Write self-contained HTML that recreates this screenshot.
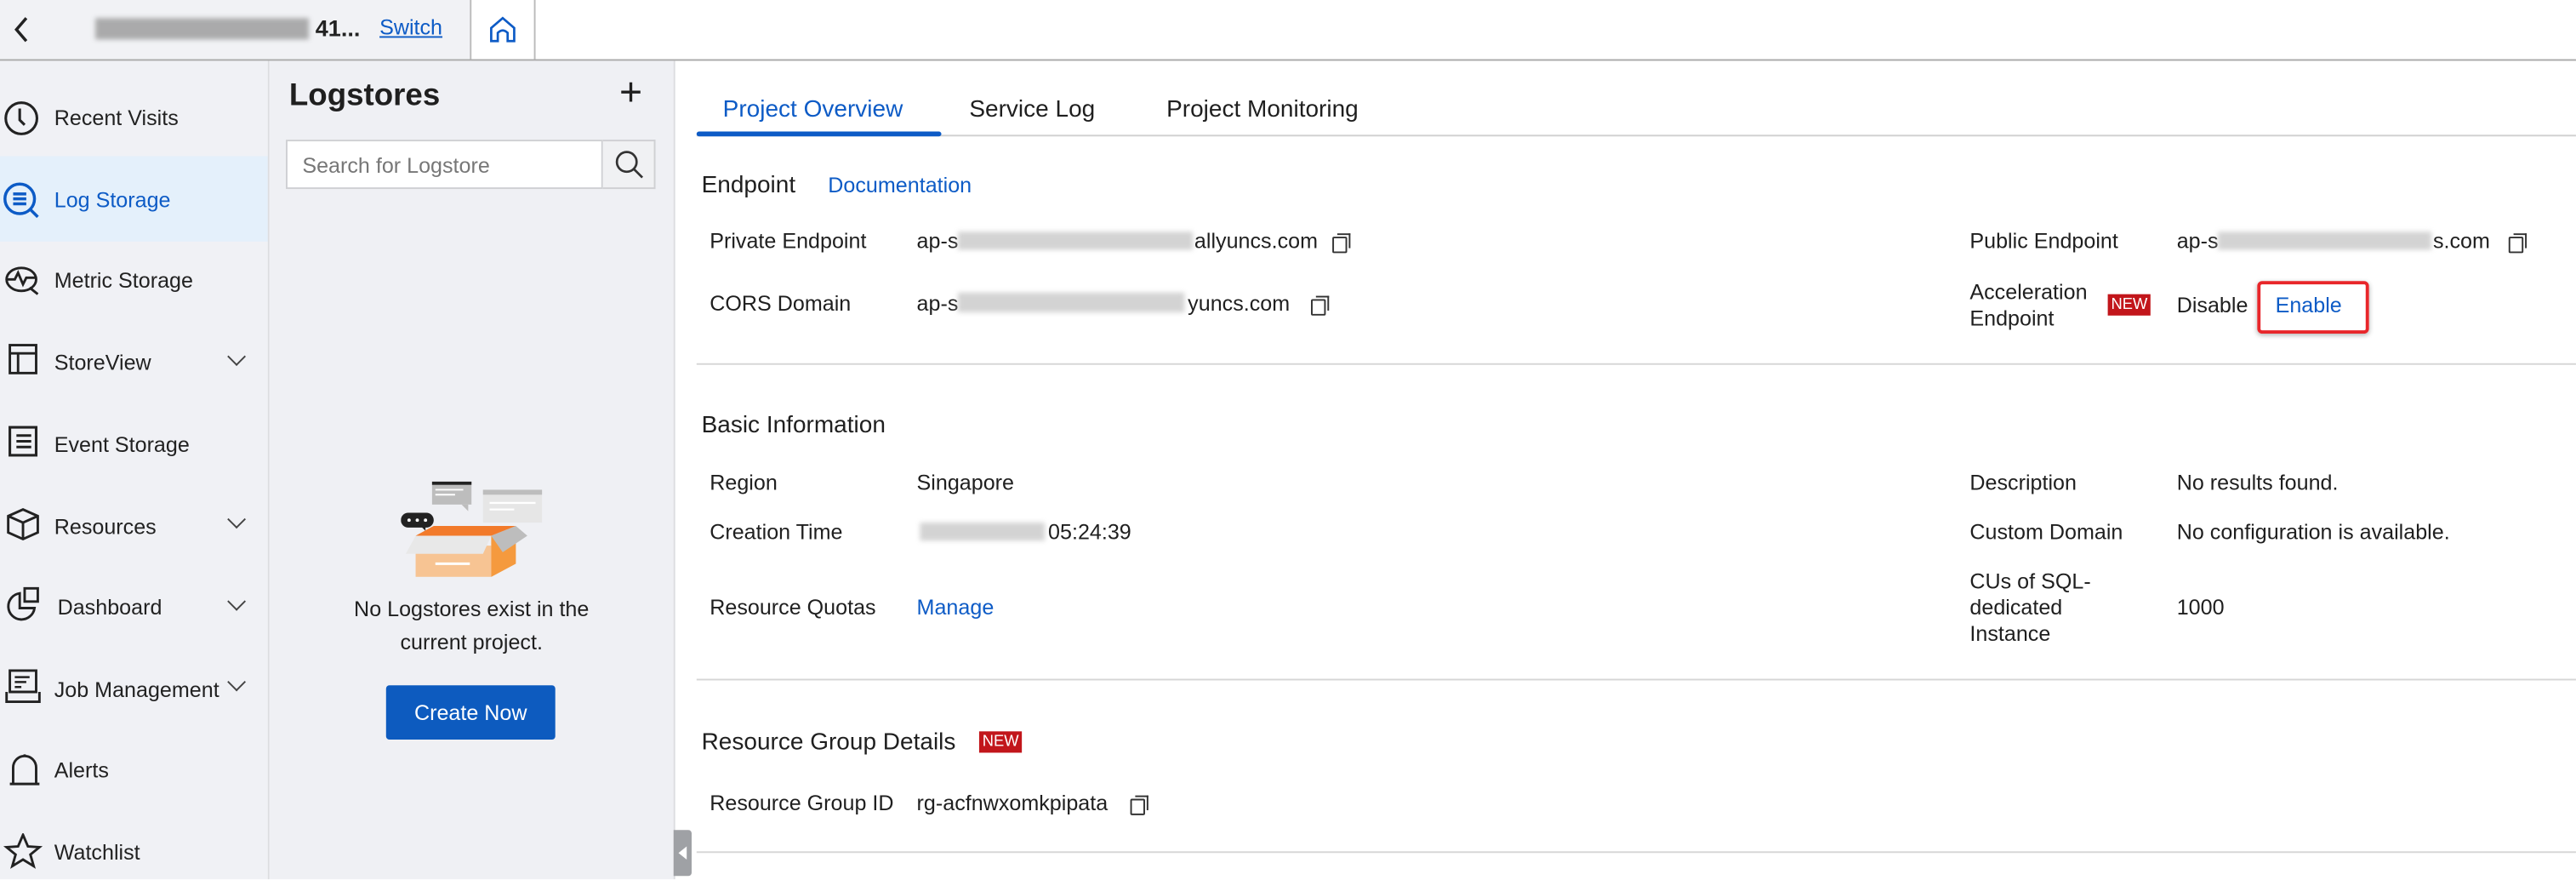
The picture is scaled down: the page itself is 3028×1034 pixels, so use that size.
<!DOCTYPE html>
<html><head><meta charset="utf-8"><style>
html,body{margin:0;padding:0;width:3028px;height:1034px;overflow:hidden;background:#fff}
#w{position:absolute;left:0;top:0;width:1568px;height:535px;transform:scale(1.9311);transform-origin:0 0;font-family:"Liberation Sans",sans-serif;color:#1f1f1f;font-size:13px}
.a{position:absolute;white-space:nowrap}
.blue{color:#0d5bc6}
.bl{position:absolute;background:#c8c8c8;filter:blur(1.5px);opacity:.8}
.cp{position:absolute;width:7px;height:8px;border:1px solid #333;border-radius:1px}
.cp:after{content:"";position:absolute;left:2px;top:-3px;width:7px;height:8px;border-top:1px solid #333;border-right:1px solid #333}
.nav{position:absolute;left:33px;font-size:13px;color:#222}
.chev{position:absolute;left:140px;width:7px;height:7px;border-right:1.2px solid #444;border-bottom:1.2px solid #444;transform:rotate(45deg)}
.hr{position:absolute;left:424px;width:1144px;height:1px;background:#d6d6d6}
.new{position:absolute;background:#c2161b;color:#fff;font-size:9.5px;padding:1px 2px;line-height:11px}
</style></head><body><div id="w">
<!-- top bar -->
<div class="a" style="left:0;top:0;width:286px;height:36px;background:#f1f2f5"></div>
<div class="a" style="left:0;top:36px;width:1568px;height:1px;background:#aaa"></div>
<div class="a" style="left:286px;top:0;width:1px;height:36px;background:#bbb"></div>
<div class="a" style="left:325px;top:0;width:1px;height:36px;background:#bbb"></div>
<svg class="a" style="left:8px;top:9px" width="10" height="18"><path d="M8 2 L2 9 L8 16" fill="none" stroke="#222" stroke-width="1.8"/></svg>
<div class="bl" style="left:58px;top:11px;width:130px;height:13px;background:#999"></div>
<div class="a" style="left:192px;top:9px;font-size:14px;font-weight:bold;color:#222">41...</div>
<div class="a blue" style="left:231px;top:9px;font-size:13px;text-decoration:underline">Switch</div>
<svg class="a" style="left:297px;top:9px" width="18" height="18"><path d="M2 16 V8 L9 2 L16 8 V16 H12 V11 Q9 8 6 11 V16 Z" fill="none" stroke="#0d5bc6" stroke-width="1.4"/></svg>
<!-- sidebar -->
<div class="a" style="left:0;top:37px;width:163px;height:498px;background:#f0f1f5"></div>
<div class="a" style="left:0;top:95px;width:163px;height:52px;background:#e4f0fb"></div>
<div class="a" style="left:163px;top:37px;width:1px;height:498px;background:#dcdde0"></div>
<svg class="a" style="left:2px;top:61px" width="22" height="22"><circle cx="11" cy="11" r="9.5" fill="none" stroke="#222" stroke-width="1.6"/><path d="M10 5 V12 L13 15" fill="none" stroke="#222" stroke-width="1.6"/></svg>
<div class="nav" style="top:64px">Recent Visits</div>
<svg class="a" style="left:2px;top:111px" width="24" height="24"><circle cx="10" cy="10" r="9" fill="none" stroke="#0d5bc6" stroke-width="1.8"/><path d="M6 7H14M6 10H14M6 13H14M16 16L21 21" stroke="#0d5bc6" stroke-width="1.8"/></svg>
<div class="nav blue" style="top:114px;color:#0d5bc6">Log Storage</div>
<svg class="a" style="left:3px;top:161px" width="22" height="20"><ellipse cx="10" cy="9" rx="9" ry="7" fill="none" stroke="#222" stroke-width="1.5"/><path d="M1 9H6L8 5L11 12L13 8H19M15 14L20 18" fill="none" stroke="#222" stroke-width="1.5"/></svg>
<div class="nav" style="top:163px">Metric Storage</div>
<svg class="a" style="left:5px;top:209px" width="20" height="20"><rect x="1" y="1" width="16" height="17" fill="none" stroke="#222" stroke-width="1.5"/><path d="M1 6H17M6 6V18" stroke="#222" stroke-width="1.5"/></svg>
<div class="nav" style="top:213px">StoreView</div><div class="chev" style="top:213px"></div>
<svg class="a" style="left:5px;top:259px" width="20" height="20"><rect x="1" y="1" width="16" height="17" fill="none" stroke="#222" stroke-width="1.6"/><path d="M5 6H14M5 9.5H14M5 13H14" stroke="#222" stroke-width="1.6"/></svg>
<div class="nav" style="top:263px">Event Storage</div>
<svg class="a" style="left:3px;top:309px" width="22" height="20"><path d="M2 5L11 1L20 5V15L11 19L2 15Z M2 5L11 9L20 5 M11 9V19" fill="none" stroke="#222" stroke-width="1.5"/></svg>
<div class="nav" style="top:313px">Resources</div><div class="chev" style="top:312px"></div>
<svg class="a" style="left:3px;top:357px" width="22" height="22"><path d="M9 4A8 8 0 1 0 18 13H9Z" fill="none" stroke="#222" stroke-width="1.5"/><path d="M12 1H20V9H12Z" fill="none" stroke="#222" stroke-width="1.5"/></svg>
<div class="nav" style="top:362px;left:35px">Dashboard</div><div class="chev" style="top:362px"></div>
<svg class="a" style="left:3px;top:407px" width="22" height="22"><path d="M3 1H19V14H3Z M1 14V20H21V14" fill="none" stroke="#222" stroke-width="1.5"/><path d="M6 5H15M6 8H13M6 11H10" stroke="#222" stroke-width="1.3"/></svg>
<div class="nav" style="top:412px">Job Management</div><div class="chev" style="top:411px"></div>
<svg class="a" style="left:5px;top:457px" width="20" height="22"><path d="M3 20V10A7 7 0 0 1 17 10V20M1 20H19M10 2V3" fill="none" stroke="#222" stroke-width="1.5"/></svg>
<div class="nav" style="top:461px">Alerts</div>
<svg class="a" style="left:2px;top:507px" width="24" height="22"><path d="M12 1L15 8L22 8.5L16.5 13L18.5 20L12 16L5.5 20L7.5 13L2 8.5L9 8Z" fill="none" stroke="#222" stroke-width="1.5"/></svg>
<div class="nav" style="top:511px">Watchlist</div>
<!-- logstores panel -->
<div class="a" style="left:164px;top:37px;width:246px;height:498px;background:#eff0f4"></div>
<div class="a" style="left:410px;top:37px;width:1px;height:498px;background:#dcdde0"></div>
<div class="a" style="left:176px;top:48px;font-size:19px;font-weight:bold">Logstores</div>
<div class="a" style="left:377px;top:43px;font-size:24px;font-weight:300">+</div>
<div class="a" style="left:174px;top:85px;width:193px;height:30px;background:#fff;border:1px solid #cfd0d3;box-sizing:border-box"></div>
<div class="a" style="left:184px;top:93px;color:#777;font-size:13px">Search for Logstore</div>
<div class="a" style="left:367px;top:85px;width:32px;height:30px;background:#f0f1f3;border:1px solid #cfd0d3;border-left:none;box-sizing:border-box"></div>
<svg class="a" style="left:374px;top:91px" width="18" height="18"><circle cx="7.5" cy="7.5" r="6" fill="none" stroke="#333" stroke-width="1.4"/><path d="M12 12L17 17" stroke="#333" stroke-width="1.4"/></svg>
<svg class="a" style="left:244px;top:293px" width="86" height="58" viewBox="0 0 86 58">
<rect x="50" y="5" width="36" height="20" fill="#e6e6e6"/><rect x="50" y="5" width="36" height="3" fill="#bdbdbd"/>
<path d="M54 13H82M54 17H69" stroke="#fff" stroke-width="1.2"/>
<rect x="19" y="0" width="24" height="14" fill="#bdbdbd"/><rect x="19" y="0" width="24" height="2" fill="#222"/>
<path d="M21 5H38M21 8H33" stroke="#fff" stroke-width="1"/><path d="M37 14L41 18V14Z" fill="#bdbdbd"/>
<rect x="0" y="19" width="20" height="9" rx="4.5" fill="#222"/><path d="M12 27L15 30V27Z" fill="#222"/>
<circle cx="5" cy="23.5" r="1" fill="#fff"/><circle cx="10" cy="23.5" r="1" fill="#fff"/><circle cx="15" cy="23.5" r="1" fill="#fff"/>
<path d="M9 33L20 27H70L55 33Z" fill="#f27a2a"/>
<path d="M9 39H55V58H9Z" fill="#f7c493"/><path d="M55 33L70 27V50L55 58Z" fill="#f59a3e"/>
<path d="M55 33L70 27L77 33L62 43Z" fill="#bdbdbd"/>
<path d="M3 44L9 33H55L50 44Z" fill="#e8e8e8"/>
<path d="M21 50H42" stroke="#fff" stroke-width="1.5"/>
</svg>
<div class="a" style="left:164px;top:361px;width:246px;text-align:center;white-space:normal;line-height:20px;font-size:13px">No Logstores exist in the<br>current project.</div>
<div class="a" style="left:235px;top:417px;width:103px;height:33px;background:#0d5bbf;border-radius:2px;color:#fff;text-align:center;line-height:33px;font-size:13px">Create Now</div>
<div class="a" style="left:410px;top:505px;width:11px;height:28px;background:#9fa1a5;border-radius:0 2px 2px 0"></div>
<svg class="a" style="left:412px;top:514px" width="7" height="10"><path d="M6 1L1 5L6 9Z" fill="#fff"/></svg>
<!-- main -->
<div class="a" style="left:424px;top:82px;width:1144px;height:1px;background:#d0d0d0"></div>
<div class="a" style="left:424px;top:80px;width:149px;height:3px;background:#0d5bc6;border-radius:2px"></div>
<div class="a blue" style="left:440px;top:59px;font-size:14.5px">Project Overview</div>
<div class="a" style="left:590px;top:59px;font-size:14.5px">Service Log</div>
<div class="a" style="left:710px;top:59px;font-size:14.5px">Project Monitoring</div>
<div class="a" style="left:427px;top:105px;font-size:14.5px">Endpoint</div>
<div class="a blue" style="left:504px;top:105px;font-size:13px">Documentation</div>
<div class="a" style="left:432px;top:139px">Private Endpoint</div>
<div class="a" style="left:558px;top:139px">ap-s</div><div class="bl" style="left:583px;top:141px;width:143px;height:11px"></div>
<div class="a" style="left:727px;top:139px">allyuncs.com</div><div class="cp" style="left:811px;top:144px"></div>
<div class="a" style="left:432px;top:177px">CORS Domain</div>
<div class="a" style="left:558px;top:177px">ap-s</div><div class="bl" style="left:583px;top:178px;width:138px;height:12px"></div>
<div class="a" style="left:723px;top:177px">yuncs.com</div><div class="cp" style="left:798px;top:182px"></div>
<div class="a" style="left:1199px;top:139px">Public Endpoint</div>
<div class="a" style="left:1325px;top:139px">ap-s</div><div class="bl" style="left:1350px;top:141px;width:130px;height:11px"></div>
<div class="a" style="left:1481px;top:139px">s.com</div><div class="cp" style="left:1527px;top:144px"></div>
<div class="a" style="left:1199px;top:170px;line-height:16px">Acceleration<br>Endpoint</div>
<div class="new" style="left:1283px;top:179px">NEW</div>
<div class="a" style="left:1325px;top:178px">Disable</div>
<div class="a" style="left:1374px;top:171px;width:68px;height:32px;border:2px solid #e8262a;border-radius:3px;box-shadow:0 1px 3px rgba(0,0,0,.3);box-sizing:border-box"></div>
<div class="a blue" style="left:1385px;top:178px">Enable</div>
<div class="hr" style="top:221px"></div>
<div class="a" style="left:427px;top:251px;font-size:14.5px">Basic Information</div>
<div class="a" style="left:432px;top:286px">Region</div><div class="a" style="left:558px;top:286px">Singapore</div>
<div class="a" style="left:432px;top:316px">Creation Time</div><div class="bl" style="left:560px;top:318px;width:76px;height:11px"></div>
<div class="a" style="left:638px;top:316px">05:24:39</div>
<div class="a" style="left:432px;top:362px">Resource Quotas</div><div class="a blue" style="left:558px;top:362px">Manage</div>
<div class="a" style="left:1199px;top:286px">Description</div><div class="a" style="left:1325px;top:286px">No results found.</div>
<div class="a" style="left:1199px;top:316px">Custom Domain</div><div class="a" style="left:1325px;top:316px">No configuration is available.</div>
<div class="a" style="left:1199px;top:346px;line-height:16px">CUs of SQL-<br>dedicated<br>Instance</div><div class="a" style="left:1325px;top:362px">1000</div>
<div class="hr" style="top:413px"></div>
<div class="a" style="left:427px;top:444px;font-size:14.5px">Resource Group Details</div>
<div class="new" style="left:596px;top:445px">NEW</div>
<div class="a" style="left:432px;top:481px">Resource Group ID</div><div class="a" style="left:558px;top:481px">rg-acfnwxomkpipata</div>
<div class="cp" style="left:688px;top:486px"></div>
<div class="hr" style="top:518px"></div>
</div></body></html>
